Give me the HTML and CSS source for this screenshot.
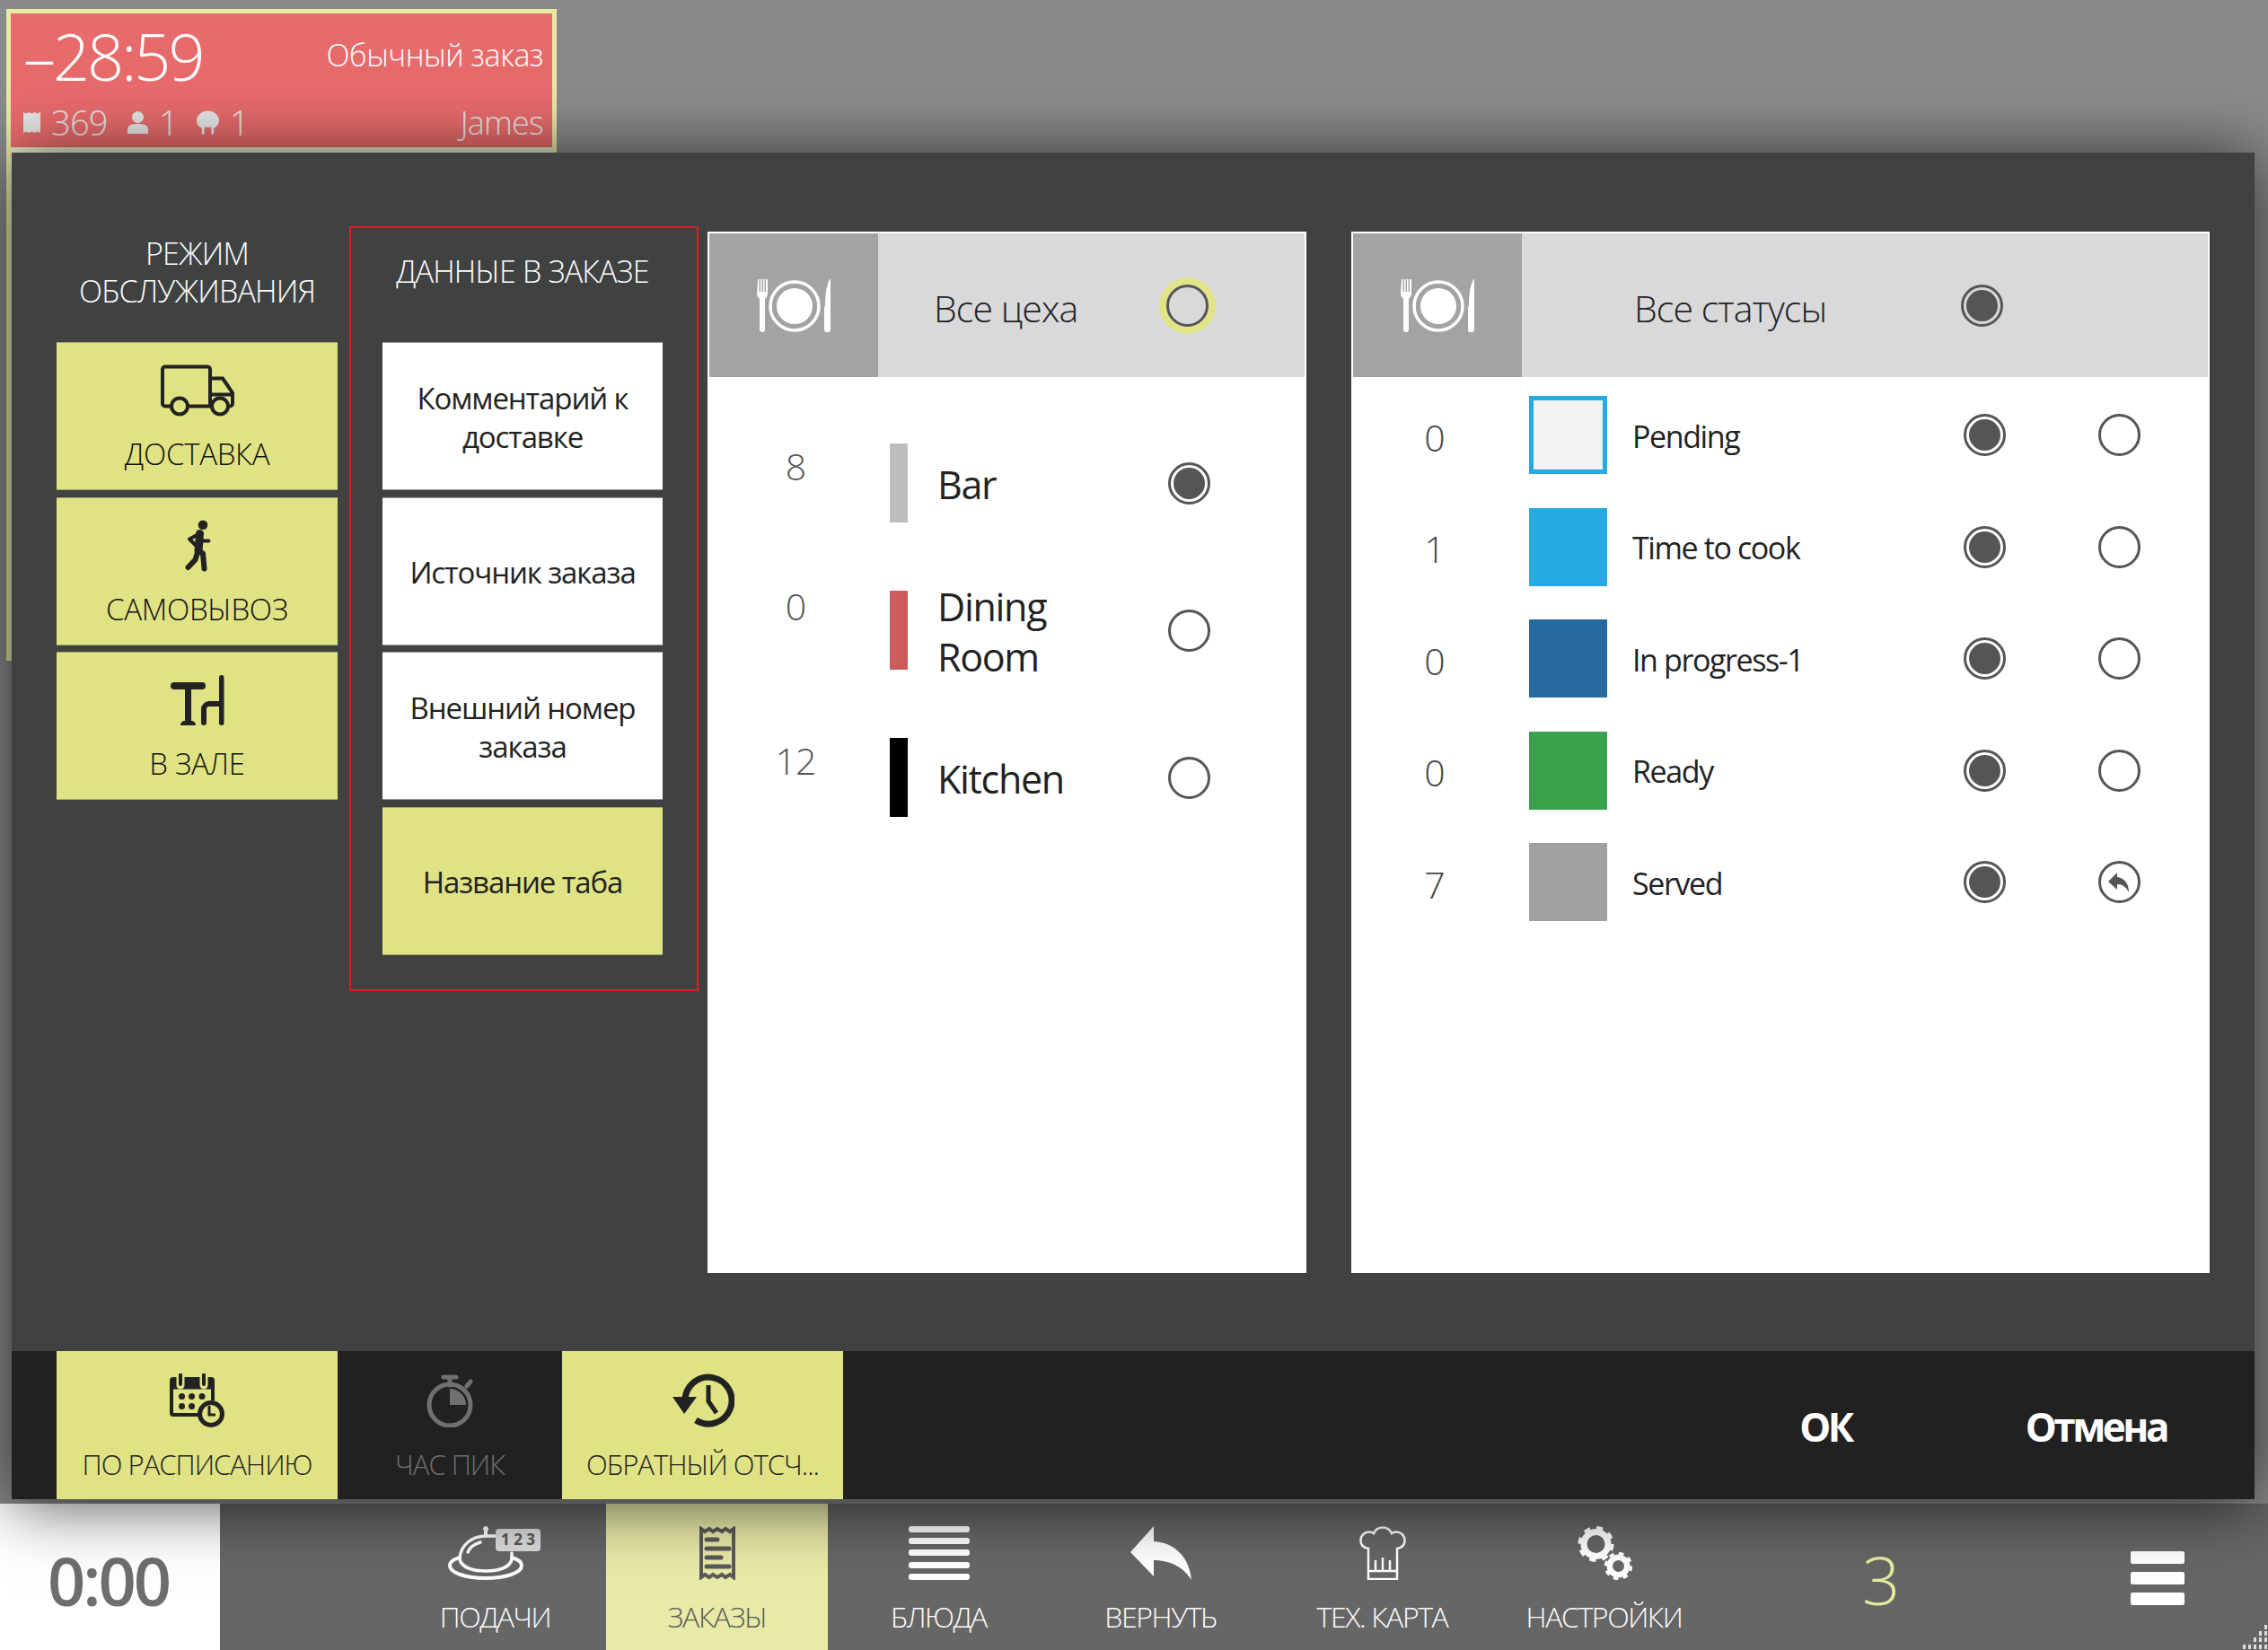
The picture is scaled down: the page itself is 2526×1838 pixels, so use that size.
FILE: index.html
```html
<!DOCTYPE html>
<html lang="ru">
<head>
    <meta charset="UTF-8">
    <title>Заказы</title>
    <link rel="stylesheet" href="styles.css">
</head>
<body>
    <!-- board behind the dialog -->
    <main class="board">
        <div class="order-card">
            <div class="order-head">
                <div class="order-top">
                    <span class="order-time">–28:59</span>
                    <span class="order-type">Обычный заказ</span>
                </div>
                <div class="order-bottom">
                    <svg class="order-icon" width="19" height="25" viewBox="0 0 19 25"><path d="M0 1l3 1.5 3-1.5 3.5 1.5 3-1.5 3 1.5 3.5-1.5v23l-3.5-1.5-3 1.5-3-1.5-3.5 1.5-3-1.5-3 1.5z" fill="#e6e6e6"/></svg>
                    <span class="order-num num-long">369</span>
                    <svg class="order-icon" width="23" height="25" viewBox="0 0 23 25"><circle cx="11.5" cy="6.5" r="6.5" fill="#e6e6e6"/><path d="M0 25v-5c0-4 4-6 11.5-6s11.5 2 11.5 6v5z" fill="#e6e6e6"/></svg>
                    <span class="order-num">1</span>
                    <svg class="order-icon" width="25" height="27" viewBox="0 0 26 27"><path d="M13 0c7 0 13 5 13 11 0 5-3 8-6 9v7h-3v-8H9v8H6v-7c-3-1-6-4-6-9C0 5 6 0 13 0z" fill="#e6e6e6"/></svg>
                    <span class="order-num">1</span>
                    <span class="order-waiter">James</span>
                </div>
            </div>
        </div>
    </main>

    <!-- bottom toolbar -->
    <nav class="toolbar">
        <div class="clock">0:00</div>
        <div class="tabs">
            <div class="tab">
                <svg width="105" height="60" viewBox="0 0 105 60" fill="none" stroke="#fff" stroke-linecap="round">
                    <circle cx="42" cy="3" r="2.5" fill="#fff"/>
                    <path d="M42 4v6" stroke-width="4"/>
                    <path d="M13 36C14 20 28 11 42 11h10" stroke-width="3.5"/>
                    <path d="M22 29c2-5 7-9 14-11" stroke-width="3.5"/>
                    <path d="M71 30v7" stroke-width="3.5"/>
                    <path d="M13 37c2 9 14 13 29 13s27-4 29-13" stroke-width="3.5"/>
                    <path d="M13 35C6 37 2 40 2 44c0 8 18 14 40 14s40-6 40-14c0-4-4-7-11-9" stroke-width="4"/>
                    <rect x="53" y="3" width="50" height="25" rx="4" fill="#dcdcdc" stroke="none"/>
                    <text x="78" y="21" text-anchor="middle" class="bell-num">1 2 3</text>
                </svg>
                <span>ПОДАЧИ</span>
            </div>
            <div class="tab tab-active">
                <svg width="42" height="60" viewBox="0 0 42 60" fill="none" stroke="#5a5a5a">
                    <path d="M3 3l4 3 5-3 4 3 5-3 5 3 4-3 5 3 4-3v54l-4-3-5 3-4-3-5 3-5-3-4 3-5-3-4 3z" stroke-width="4"/>
                    <path d="M9 15h12M9 25h25M9 35h16M9 45h25" stroke-width="5" stroke-linecap="round"/>
                </svg>
                <span>ЗАКАЗЫ</span>
            </div>
            <div class="tab">
                <svg width="68" height="60" viewBox="0 0 68 60" fill="#fff">
                    <rect y="0" width="68" height="7" rx="3"/>
                    <rect y="13" width="68" height="7" rx="3"/>
                    <rect y="26" width="68" height="7" rx="3"/>
                    <rect y="40" width="68" height="7" rx="3"/>
                    <rect y="53" width="68" height="7" rx="3"/>
                </svg>
                <span>БЛЮДА</span>
            </div>
            <div class="tab">
                <svg width="68" height="60" viewBox="0 0 68 60"><path d="M26 0L0 29l26 27V38c16 0 32 6 42 22-2-24-18-42-42-43z" fill="#fff"/></svg>
                <span>ВЕРНУТЬ</span>
            </div>
            <div class="tab">
                <svg width="52" height="60" viewBox="0 0 52 60" fill="none" stroke="#fff" stroke-width="2.5">
                    <path d="M10 59V25C4 24 1.5 20 1.5 16 1.5 10 6 6.5 11 6.5c2 0 4 .5 5 1.5C18 3.5 21 1.5 26 1.5S34 3.5 36 8c1-1 3-1.5 5-1.5 5 0 9.5 3.5 9.5 9.5 0 4-2.5 8-8.5 9V59z"/>
                    <path d="M10 50h32M18 50V38M26 50V35M34 50V38"/>
                </svg>
                <span>ТЕХ. КАРТА</span>
            </div>
            <div class="tab">
                <svg width="62" height="60" viewBox="0 0 62 60" fill="none" stroke="#fff">
                    <circle cx="21.5" cy="20" r="13.5" stroke-width="7"/>
                    <circle cx="21.5" cy="20" r="18" stroke-width="4" stroke-dasharray="7.1 7.04"/>
                    <circle cx="46.5" cy="44.5" r="9.75" stroke-width="6.5"/>
                    <circle cx="46.5" cy="44.5" r="14" stroke-width="3.5" stroke-dasharray="5.5 5.5"/>
                </svg>
                <span>НАСТРОЙКИ</span>
            </div>
        </div>
        <div class="counter">3</div>
        <div class="burger"><i></i><i></i><i></i></div>
        <svg class="grip" width="32" height="30" viewBox="0 0 32 30" fill="#ddd">
            <rect x="28" y="2" width="3" height="5"/>
            <rect x="22" y="9" width="3" height="5"/><rect x="28" y="9" width="3" height="5"/>
            <rect x="16" y="16" width="3" height="5"/><rect x="22" y="16" width="3" height="5"/><rect x="28" y="16" width="3" height="5"/>
            <rect x="4" y="24" width="3" height="5"/><rect x="10" y="24" width="3" height="5"/><rect x="16" y="24" width="3" height="5"/><rect x="22" y="24" width="3" height="5"/><rect x="28" y="24" width="3" height="5"/>
        </svg>
    </nav>

    <!-- settings dialog -->
    <section class="dialog">
        <div class="dialog-body">
            <div class="mode-col">
                <h2 class="col-title">РЕЖИМ<br>ОБСЛУЖИВАНИЯ</h2>
                <div class="tile-list">
                    <div class="tile tile-on tile-icon">
                        <svg width="82" height="57" viewBox="0 0 82 57" fill="none" stroke="#222" stroke-width="4">
                            <path d="M12 46H5a3 3 0 0 1-3-3V5a3 3 0 0 1 3-3h47a3 3 0 0 1 3 3v41H30"/>
                            <path d="M55 15h14l11 16v12a3 3 0 0 1-3 3h-2M55 33h25"/>
                            <circle cx="21" cy="46" r="9"/>
                            <circle cx="66" cy="46" r="9"/>
                        </svg>
                        <span>ДОСТАВКА</span>
                    </div>
                    <div class="tile tile-on tile-icon">
                        <svg width="30" height="57" viewBox="0 0 30 57" fill="none" stroke="#222" stroke-linecap="round" stroke-linejoin="round">
                            <circle cx="21" cy="5.3" r="5.3" fill="#222" stroke="none"/>
                            <path d="M17.5 15L16 34" stroke-width="9"/>
                            <path d="M17 15L6 21l7 7M19 23l8.5 0" stroke-width="4"/>
                            <path d="M16 34l5 3 1.5 17M15 36l-2.5 8-8 8.5" stroke-width="6"/>
                        </svg>
                        <span>САМОВЫВОЗ</span>
                    </div>
                    <div class="tile tile-on tile-icon">
                        <svg width="61" height="56" viewBox="0 0 61 56" fill="#222">
                            <rect x="1" y="8" width="39" height="8" rx="4"/>
                            <rect x="17" y="14" width="7" height="38"/>
                            <path d="M12 56c0-3 2-5 5-5h7c3 0 5 2 5 5z"/>
                            <rect x="55" y="0" width="5.5" height="56" rx="2.7"/>
                            <path d="M38 53V38a6 6 0 0 1 6-6h12" fill="none" stroke="#222" stroke-width="6" stroke-linecap="round"/>
                        </svg>
                        <span>В ЗАЛЕ</span>
                    </div>
                </div>
            </div>

            <div class="data-col">
                <h2 class="col-title">ДАННЫЕ В ЗАКАЗЕ</h2>
                <div class="tile-list">
                    <div class="tile">Комментарий к<br>доставке</div>
                    <div class="tile">Источник заказа</div>
                    <div class="tile">Внешний номер<br>заказа</div>
                    <div class="tile tile-on">Название таба</div>
                </div>
            </div>

            <div class="panel panel-shops">
                <div class="panel-head">
                    <div class="panel-icon">
                        <svg width="83" height="60" viewBox="0 0 83 60" fill="#fff">
                            <path d="M1 1h1.6v14H4V1h1.6v14H7V1h1.6v14H10V1h2v16c0 3-2 5-3 6v34a3 3 0 0 1-6 0V23c-1-1-3-3-3-6z"/>
                            <circle cx="42" cy="31" r="20"/>
                            <circle cx="42" cy="31" r="27" fill="none" stroke="#fff" stroke-width="3.5"/>
                            <path d="M82 0v57a3 3 0 0 1-7 0V34c0-2 1-3 1-5 0-12 2-24 6-29z"/>
                        </svg>
                    </div>
                    <span class="panel-title shops-title">Все цеха</span>
                    <span class="radio radio-focus"></span>
                </div>
                <div class="shop-list">
                    <div class="shop-row">
                        <span class="shop-count">8</span>
                        <span class="shop-bar bar-grey"></span>
                        <span class="shop-name">Bar</span>
                        <span class="radio radio-on"></span>
                    </div>
                    <div class="shop-row">
                        <span class="shop-count count-high">0</span>
                        <span class="shop-bar bar-red"></span>
                        <span class="shop-name">Dining Room</span>
                        <span class="radio"></span>
                    </div>
                    <div class="shop-row">
                        <span class="shop-count">12</span>
                        <span class="shop-bar bar-black"></span>
                        <span class="shop-name">Kitchen</span>
                        <span class="radio"></span>
                    </div>
                </div>
            </div>

            <div class="panel panel-status">
                <div class="panel-head">
                    <div class="panel-icon">
                        <svg width="83" height="60" viewBox="0 0 83 60" fill="#fff">
                            <path d="M1 1h1.6v14H4V1h1.6v14H7V1h1.6v14H10V1h2v16c0 3-2 5-3 6v34a3 3 0 0 1-6 0V23c-1-1-3-3-3-6z"/>
                            <circle cx="42" cy="31" r="20"/>
                            <circle cx="42" cy="31" r="27" fill="none" stroke="#fff" stroke-width="3.5"/>
                            <path d="M82 0v57a3 3 0 0 1-7 0V34c0-2 1-3 1-5 0-12 2-24 6-29z"/>
                        </svg>
                    </div>
                    <span class="panel-title status-title">Все статусы</span>
                    <span class="radio radio-on"></span>
                </div>
                <div class="status-list">
                    <div class="status-row">
                        <span class="status-count">0</span>
                        <span class="swatch swatch-pending"></span>
                        <span class="status-name">Pending</span>
                        <span class="radio radio-on"></span>
                        <span class="radio"></span>
                    </div>
                    <div class="status-row">
                        <span class="status-count">1</span>
                        <span class="swatch swatch-cook"></span>
                        <span class="status-name">Time to cook</span>
                        <span class="radio radio-on"></span>
                        <span class="radio"></span>
                    </div>
                    <div class="status-row">
                        <span class="status-count">0</span>
                        <span class="swatch swatch-progress"></span>
                        <span class="status-name">In progress-1</span>
                        <span class="radio radio-on"></span>
                        <span class="radio"></span>
                    </div>
                    <div class="status-row">
                        <span class="status-count">0</span>
                        <span class="swatch swatch-ready"></span>
                        <span class="status-name">Ready</span>
                        <span class="radio radio-on"></span>
                        <span class="radio"></span>
                    </div>
                    <div class="status-row">
                        <span class="status-count">7</span>
                        <span class="swatch swatch-served"></span>
                        <span class="status-name">Served</span>
                        <span class="radio radio-on"></span>
                        <span class="radio radio-back">
                            <svg width="26" height="24" viewBox="0 0 26 24"><path d="M11 1L1 11l10 9v-6c6 0 10 3 13 9 0-10-5-16-13-17z" fill="#555"/></svg>
                        </span>
                    </div>
                </div>
            </div>
        </div>

        <div class="dialog-foot">
            <div class="foot-btn foot-on">
                <svg width="61" height="60" viewBox="0 0 61 60" fill="none" stroke="#222">
                    <path d="M33 46H4a2 2 0 0 1-2-2V8a2 2 0 0 1 2-2h42a2 2 0 0 1 2 2v22" stroke-width="4"/>
                    <path d="M2 12h46" stroke-width="11"/>
                    <path d="M12 1v12M38 1v12" stroke="#e0e384" stroke-width="9" stroke-linecap="round"/>
                    <path d="M12 1v11M38 1v11" stroke-width="4" stroke-linecap="round"/>
                    <g fill="#222" stroke="none">
                        <circle cx="13.5" cy="25.5" r="3.5"/><circle cx="24.5" cy="25.5" r="3.5"/><circle cx="36" cy="25.5" r="3.5"/>
                        <circle cx="13.5" cy="36.5" r="3.5"/><circle cx="24.5" cy="36.5" r="3.5"/>
                    </g>
                    <circle cx="46" cy="45" r="12.5" fill="#e0e384" stroke-width="5"/>
                    <path d="M44 36v10h7" stroke-width="3"/>
                </svg>
                <span>ПО РАСПИСАНИЮ</span>
            </div>
            <div class="foot-btn foot-off">
                <svg width="56" height="60" viewBox="0 0 56 60" fill="none" stroke="#707070">
                    <circle cx="28" cy="35" r="23" stroke-width="5"/>
                    <path d="M28 13V5M21 4h14M47 14l4-5" stroke-width="5" stroke-linecap="round"/>
                    <path d="M28 17a18 18 0 0 1 18 18H28z" fill="#707070" stroke="none"/>
                </svg>
                <span>ЧАС ПИК</span>
            </div>
            <div class="foot-btn foot-on">
                <svg width="70" height="60" viewBox="0 0 70 60" fill="none" stroke="#222">
                    <path d="M15 30A26 26 0 1 1 27 52" stroke-width="7"/>
                    <path d="M1 26h27L14 45z" fill="#222" stroke="none"/>
                    <path d="M41 13v18l9 13" stroke-width="5"/>
                </svg>
                <span>ОБРАТНЫЙ ОТСЧ...</span>
            </div>
            <div class="foot-actions">
                <span class="action-ok">ОК</span>
                <span class="action-cancel">Отмена</span>
            </div>
        </div>
    </section>
</body>
</html>
```

FILE: styles.css
```css
* {
    box-sizing: border-box;
}

html, body {
    margin: 0;
    padding: 0;
}

body {
    position: relative;
    display: flex;
    flex-direction: column;
    width: 2526px;
    height: 1838px;
    overflow: hidden;
    background: #8a8a8a;
    font-family: "Open Sans", "Noto Sans", sans-serif;
    color: #222;
}

.board {
    flex: 1;
    padding: 10px 0 0 7px;
}

/* order card behind the dialog */
.order-card {
    width: 613px;
    height: 726px;
    border: 5px solid #e8e9a6;
    background: #e9e9c8;
}

.order-head {
    height: 149px;
    padding: 9px 10px 0 14px;
    background: #e86b6c;
    color: #fff;
}

.order-top {
    display: flex;
    justify-content: space-between;
    align-items: center;
    height: 76px;
}

.order-time {
    font-size: 72px;
    font-weight: 300;
    letter-spacing: -3px;
    line-height: 76px;
}

.order-type {
    padding-bottom: 3px;
    font-size: 34px;
    font-weight: 300;
    letter-spacing: -0.4px;
}

.order-bottom {
    display: flex;
    align-items: center;
    height: 44px;
    margin-top: 14px;
    font-size: 38px;
    font-weight: 300;
    letter-spacing: -0.8px;
    color: #e6e6e6;
}

.order-icon {
    margin-right: 12px;
}

.order-num {
    width: 42px;
}

.order-num.num-long {
    width: 85px;
}

.order-waiter {
    margin-left: auto;
    font-size: 36px;
}

/* bottom toolbar */
.toolbar {
    position: relative;
    display: flex;
    height: 163px;
    background: #666;
    color: #fff;
}

.clock {
    display: flex;
    justify-content: center;
    align-items: center;
    width: 245px;
    padding: 8px 4px 0 0;
    background: #fff;
    color: #6e6e6e;
    font-size: 74px;
    font-weight: 600;
    letter-spacing: -3px;
}

.tabs {
    display: flex;
    padding-left: 183px;
}

.tab {
    display: flex;
    flex-direction: column;
    align-items: center;
    width: 247px;
    padding-top: 25px;
    font-size: 32px;
    font-weight: 300;
    letter-spacing: -1.4px;
}

.tab span {
    margin-top: 21px;
    line-height: 40px;
}

.tab-active {
    background: #e8eaa8;
    color: #5a5a5a;
}

.bell-num {
    font-size: 17px;
    font-weight: 700;
    letter-spacing: 0;
    fill: #555;
    stroke: none;
}

.counter {
    width: 100px;
    margin-left: 135px;
    padding-top: 34px;
    text-align: center;
    color: #e8eaa0;
    font-size: 74px;
    font-weight: 300;
}

.burger {
    display: flex;
    flex-direction: column;
    gap: 9px;
    margin: 53px 0 0 228px;
}

.burger i {
    width: 60px;
    height: 14px;
    border-radius: 2px;
    background: #fff;
}

.grip {
    position: absolute;
    right: 0;
    bottom: 0;
}

/* dialog */
.dialog {
    position: absolute;
    top: 170px;
    left: 13px;
    display: flex;
    flex-direction: column;
    width: 2498px;
    height: 1500px;
    background: #404242;
    box-shadow: 0 5px 70px rgba(0, 0, 0, 0.7);
}

.dialog-body {
    display: flex;
    flex: 1;
    align-items: flex-start;
}

.col-title {
    margin: 0;
    text-align: center;
    color: #fff;
    font-size: 34px;
    font-weight: 300;
    letter-spacing: -0.8px;
    line-height: 42px;
}

.mode-col {
    width: 313px;
    margin-left: 50px;
    padding-top: 91px;
}

.mode-col .tile-list {
    margin-top: 36px;
}

.data-col {
    width: 389px;
    height: 852px;
    margin: 82px 0 0 13px;
    padding: 27px 38px 0 35px;
    border: 2px solid #e01b24;
}

.data-col .tile-list {
    margin-top: 58px;
}

.tile-list {
    display: flex;
    flex-direction: column;
    gap: 7.7px;
}

.tile {
    display: flex;
    flex-direction: column;
    justify-content: center;
    align-items: center;
    height: 165px;
    padding-top: 2px;
    background: #fff;
    color: #222;
    text-align: center;
    font-size: 33px;
    letter-spacing: -1.1px;
    line-height: 43px;
    border-top: 1px solid #999;
    border-bottom: 1px solid #999;
}

.tile-on {
    background: #e0e384;
    border-color: #a5a86a;
}

.tile-icon {
    justify-content: flex-start;
    padding-top: 24px;
    font-size: 33px;
    font-weight: 300;
    letter-spacing: -0.3px;
    color: #111;
}

.tile-icon svg {
    height: 58px;
}

.tile-icon span {
    margin-top: 20px;
}

.panel {
    height: 1160px;
    margin-top: 88px;
    padding: 2px;
    background: #fff;
}

.panel-shops {
    width: 667px;
    margin-left: 10px;
}

.panel-status {
    width: 956px;
    margin-left: 50px;
}

.panel-head {
    display: flex;
    align-items: center;
    height: 160px;
    background: #d9d9db;
}

.panel-icon {
    display: flex;
    justify-content: center;
    align-items: center;
    width: 188px;
    height: 100%;
    background: #a3a3a3;
}

.panel-title {
    padding-top: 6px;
    font-size: 41px;
    font-weight: 300;
    letter-spacing: -0.9px;
}

.shops-title {
    width: 259px;
    margin-left: 62px;
}

.status-title {
    width: 364px;
    margin-left: 125px;
}

.radio {
    flex: none;
    display: flex;
    justify-content: center;
    align-items: center;
    width: 47px;
    height: 47px;
    border: 3px solid #555;
    border-radius: 50%;
    background: #fff;
}

.radio-on {
    padding: 3px;
    background: #555;
    background-clip: content-box;
}

.radio-focus {
    background: transparent;
    box-shadow: 0 0 0 8px #e2e488;
}

.shop-list {
    padding-top: 36px;
}

.shop-row {
    display: flex;
    align-items: center;
    height: 164px;
}

.shop-count {
    align-self: flex-start;
    width: 192px;
    padding-top: 38px;
    text-align: center;
    color: #555;
    font-size: 41px;
    font-weight: 300;
    letter-spacing: -1px;
    line-height: 50px;
}

.shop-count.count-high {
    padding-top: 30px;
}

.shop-bar {
    width: 20px;
    height: 88px;
    margin-left: 9px;
}

.bar-grey {
    background: #bdbdbd;
}

.bar-red {
    background: #cc5c5c;
}

.bar-black {
    background: #000;
}

.shop-name {
    width: 257px;
    margin-left: 33px;
    padding: 3px 80px 0 0;
    font-size: 43px;
    letter-spacing: -1.3px;
    line-height: 56px;
}

.status-list {
    display: flex;
    flex-direction: column;
    gap: 37px;
    padding-top: 21px;
}

.status-row {
    display: flex;
    align-items: center;
    height: 87.5px;
}

.status-count {
    width: 182px;
    padding-top: 4px;
    text-align: center;
    color: #444;
    font-size: 41px;
    font-weight: 300;
}

.swatch {
    width: 87px;
    height: 87px;
    margin-left: 14px;
}

.swatch-pending {
    border: 5px solid #27a9e1;
    background: #f2f2f2;
}

.swatch-cook {
    background: #27a9e1;
}

.swatch-progress {
    background: #276a9e;
}

.swatch-ready {
    background: #3ba14c;
}

.swatch-served {
    background: #a0a0a0;
}

.status-name {
    width: 368.5px;
    margin-left: 28px;
    padding-top: 2px;
    font-size: 34px;
    letter-spacing: -1.4px;
}

.status-row .radio + .radio {
    margin-left: 103px;
}

.radio-back svg {
    display: block;
}

/* dialog footer */
.dialog-foot {
    display: flex;
    height: 165px;
    padding-left: 50px;
    background: #212121;
}

.foot-btn {
    display: flex;
    flex-direction: column;
    align-items: center;
    padding-top: 25px;
    font-size: 31px;
    font-weight: 300;
    letter-spacing: -1px;
    white-space: nowrap;
}

.foot-btn span {
    margin-top: 21px;
    line-height: 40px;
}

.foot-btn.foot-on {
    width: 313px;
    background: #e0e384;
}

.foot-btn.foot-off {
    width: 250px;
    color: #707070;
}

.foot-actions {
    display: flex;
    align-items: center;
    margin-left: auto;
    padding: 2px 98px 0 0;
    color: #fff;
    font-size: 44px;
    font-weight: 700;
    letter-spacing: -3.5px;
}

.action-ok {
    margin-right: 194px;
}
```
